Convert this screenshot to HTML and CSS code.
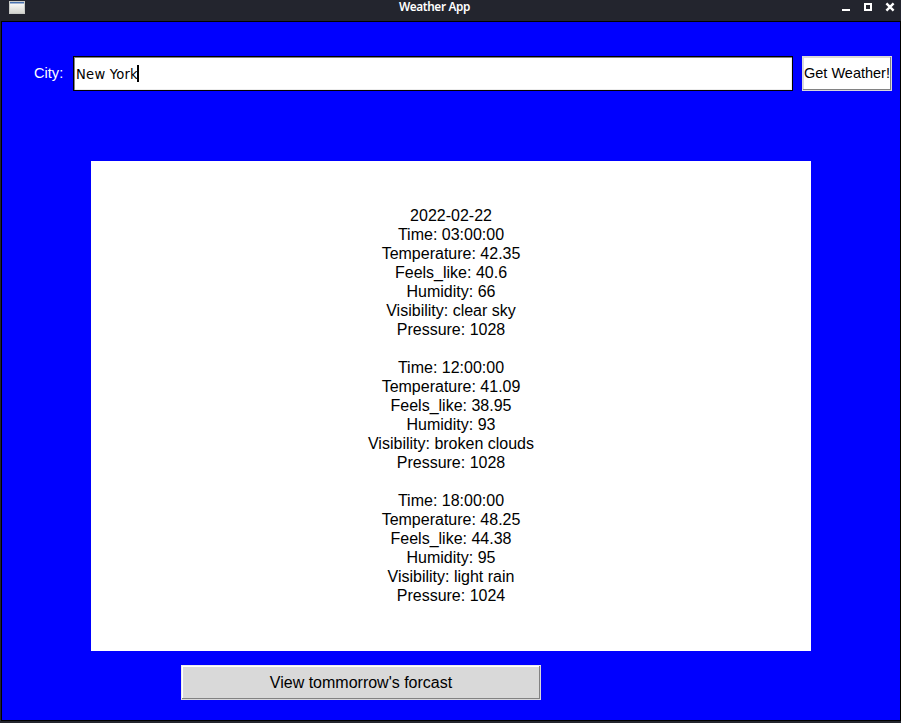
FILE: index.html
```
<!DOCTYPE html>
<html lang="en">
<head>
<meta charset="utf-8">
<title>Weather App</title>
<link rel="stylesheet" href="styles.css">
</head>
<body>
<div class="window">
  <header class="titlebar">
    <svg class="app-icon" width="16" height="13" viewBox="0 0 16 13" shape-rendering="crispEdges">
      <defs><linearGradient id="pane" x1="0" y1="0" x2="0" y2="1"><stop offset="0" stop-color="#fff"/><stop offset="1" stop-color="#d4d5d0"/></linearGradient></defs>
      <rect width="16" height="13" fill="#c9cbc8"/>
      <rect x="1" y="1" width="14" height="11" fill="url(#pane)"/>
      <rect x="1" y="1" width="14" height="1" fill="#4871b0"/>
      <rect x="1" y="2" width="14" height="1" fill="#a3b6d4"/>
    </svg>
    <h1 class="title">Weather App</h1>
    <svg class="controls" width="54" height="11" viewBox="0 0 54 11">
      <path d="M0 8h8v2H0z" fill="#fff"/>
      <path d="M23 3h6v6h-6z" fill="none" stroke="#fff" stroke-width="2"/>
      <path d="M44.4 2.4l7.2 7.2M51.6 2.4l-7.2 7.2" stroke="#fff" stroke-width="2.4"/>
    </svg>
  </header>
  <main class="content">
    <form class="search">
      <label class="label" for="city">City:</label>
      <div class="entry" id="city"><span class="value">New York</span><i class="caret"></i></div>
      <button class="get" type="button">Get Weather!</button>
    </form>
    <section class="report">2022-02-22
Time: 03:00:00
Temperature: 42.35
Feels_like: 40.6
Humidity: 66
Visibility: clear sky
Pressure: 1028

Time: 12:00:00
Temperature: 41.09
Feels_like: 38.95
Humidity: 93
Visibility: broken clouds
Pressure: 1028

Time: 18:00:00
Temperature: 48.25
Feels_like: 44.38
Humidity: 95
Visibility: light rain
Pressure: 1024</section>
    <button class="tomorrow" type="button">View tommorrow's forcast</button>
  </main>
</div>
</body>
</html>
```
FILE: styles.css
```
* { box-sizing: border-box; }
body { margin: 0; font-family: "Liberation Sans", Arial, sans-serif; overflow: hidden; }
.window { width: 901px; height: 723px; padding: 0 0 2px 1px; background: #23252e; display: flex; flex-direction: column; }
.titlebar { height: 21px; flex: none; display: grid; grid-template-columns: 54px 1fr 54px; padding: 0 5px 0 8px; }
.app-icon, .controls { margin-top: 1px; }
.title { margin: 0; font: 600 11.8px/13px "Noto Sans", sans-serif; letter-spacing: -0.35px; color: #fff; text-align: center; padding-right: 36px; }
.content { flex: 1; background: #00f; border: 1px solid #000; padding-top: 34px; }
.search { display: flex; width: 890px; height: 35px; }
.label { width: 71px; padding-left: 32px; color: #fff; font-size: 14.6px; line-height: 34px; }
.entry { width: 720px; border: 1px solid #000; box-shadow: inset 1px 1px #828282, inset -1px -1px #ececec; background: #fff; display: flex; align-items: center; padding-left: 2px; color: #000; }
.value { width: 61px; white-space: nowrap; font: 14.6px/31px "DejaVu Sans Condensed", "DejaVu Sans", sans-serif; font-stretch: condensed; letter-spacing: 0.25px; }
.caret { width: 2px; height: 17px; background: #000; }
.get { width: 90px; margin-left: 9px; padding: 0 0 1px 1px; border: 1px solid #d9d9d9; box-shadow: inset -1px -1px #828282, inset 1px 1px #d9d9d9; background: #fff; font: 14.5px/32px "Liberation Sans", sans-serif; color: #000; white-space: nowrap; text-align: left; }
.report { width: 720px; height: 490px; margin: 70px 0 0 89px; padding-top: 45px; background: #fff; color: #000; font-size: 16px; line-height: 19px; white-space: pre; text-align: center; }
.tomorrow { display: block; width: 360px; height: 35px; margin: 14px 0 0 179px; padding: 0; border: 1px solid #d9d9d9; box-shadow: inset -1px -1px #828282, inset 1px 1px #fff; border-top-color: #ececec; border-left-color: #ececec; background: #d9d9d9; color: #000; font: 16px/33px "Liberation Sans", sans-serif; }
```
